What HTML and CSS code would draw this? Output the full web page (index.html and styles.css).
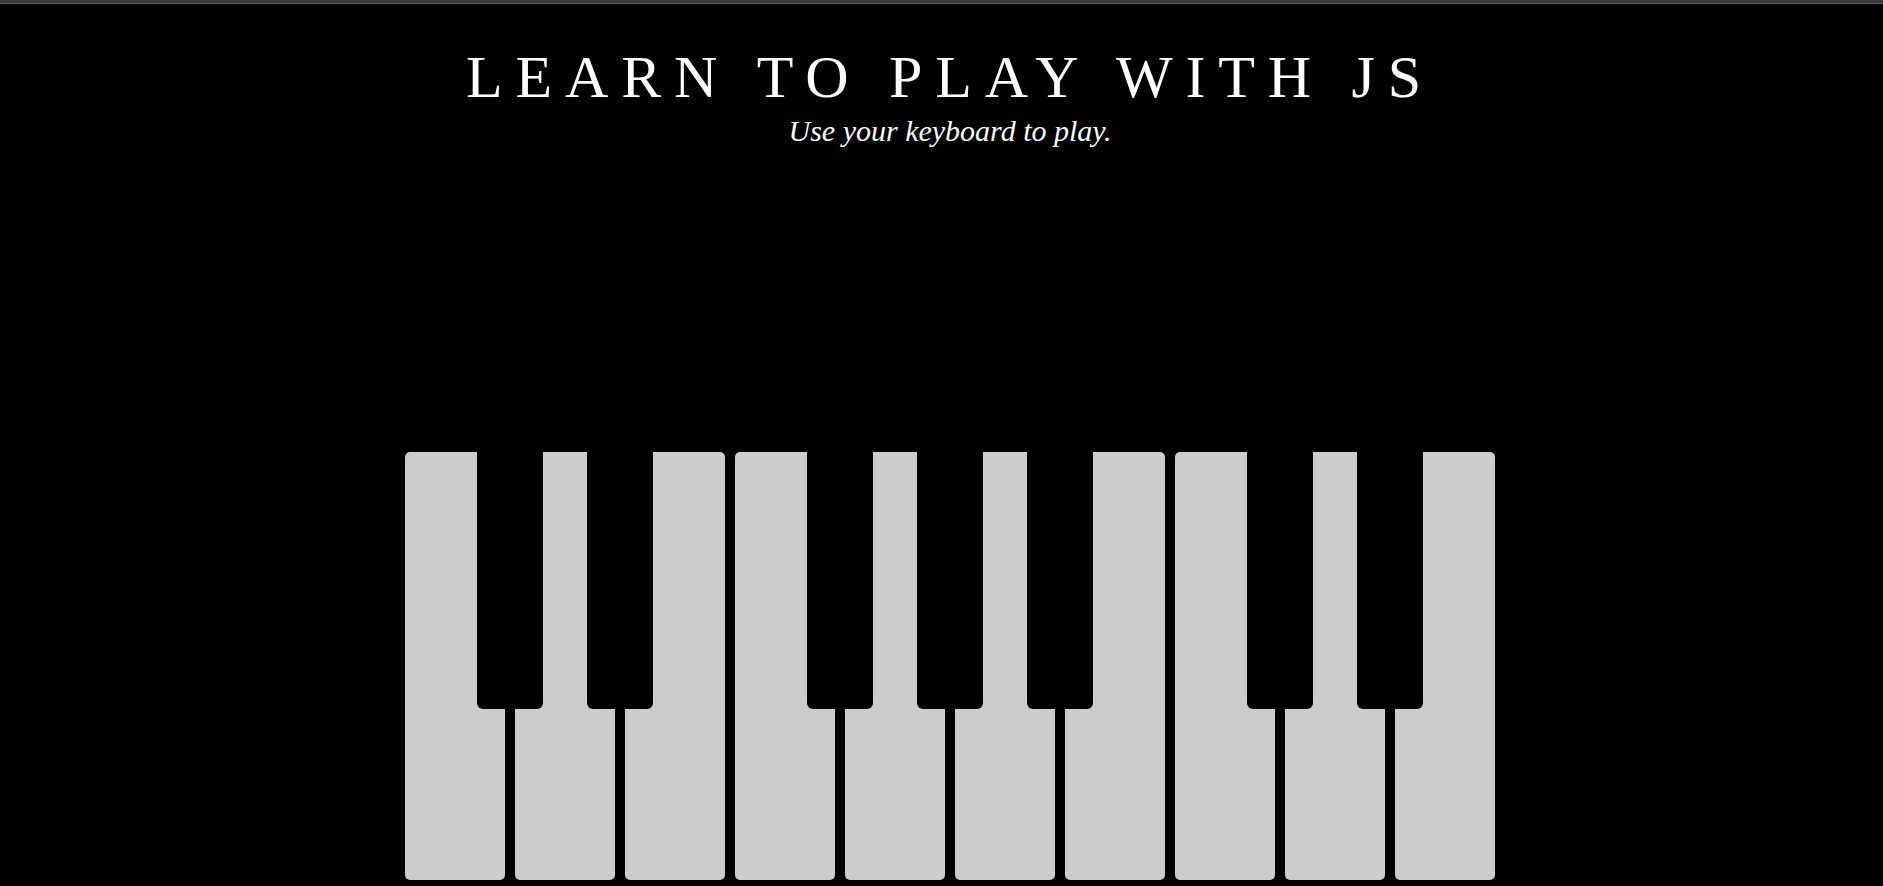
FILE: index.html
```html
<!DOCTYPE html>
<html lang="en">
<head>
<meta charset="utf-8">
<title>Learn to play with JS</title>
<link rel="stylesheet" href="styles.css">
</head>
<body>
<div class="topbar"></div>
<main class="page">
  <h1 class="title">LEARN TO PLAY WITH JS</h1>
  <p class="subtitle">Use your keyboard to play.</p>
  <div class="piano">
    <div class="key white"><div class="key black"></div></div>
    <div class="key white"><div class="key black"></div></div>
    <div class="key white"></div>
    <div class="key white"><div class="key black"></div></div>
    <div class="key white"><div class="key black"></div></div>
    <div class="key white"><div class="key black"></div></div>
    <div class="key white"></div>
    <div class="key white"><div class="key black"></div></div>
    <div class="key white"><div class="key black"></div></div>
    <div class="key white"></div>
  </div>
</main>
</body>
</html>
```

FILE: styles.css
```css
html, body {
  margin: 0;
  padding: 0;
  background: #000;
  overflow: hidden;
}

body {
  font-family: "Liberation Serif", "Times New Roman", serif;
  color: #fff;
}

.topbar {
  height: 3px;
  background: #3b3c3f;
  border-bottom: 1px solid #5e5e60;
}

.page {
  padding-left: 17px;
  text-align: center;
}

.title {
  margin: 39px 0 0;
  font-size: 60px;
  line-height: 69px;
  font-weight: normal;
  letter-spacing: 12.8px;
}

.subtitle {
  margin: 2px 0 0;
  font-size: 30px;
  line-height: 33px;
  font-style: italic;
}

.piano {
  margin-top: 305px;
  display: flex;
  justify-content: center;
  gap: 10px;
}

.key.white {
  position: relative;
  width: 100px;
  height: 428px;
  background: #cccccc;
  border-radius: 5px;
}

.key.black {
  position: absolute;
  top: 0;
  left: 72px;
  width: 66px;
  height: 257px;
  background: #000;
  border-radius: 0 0 6px 6px;
  z-index: 1;
}
```
